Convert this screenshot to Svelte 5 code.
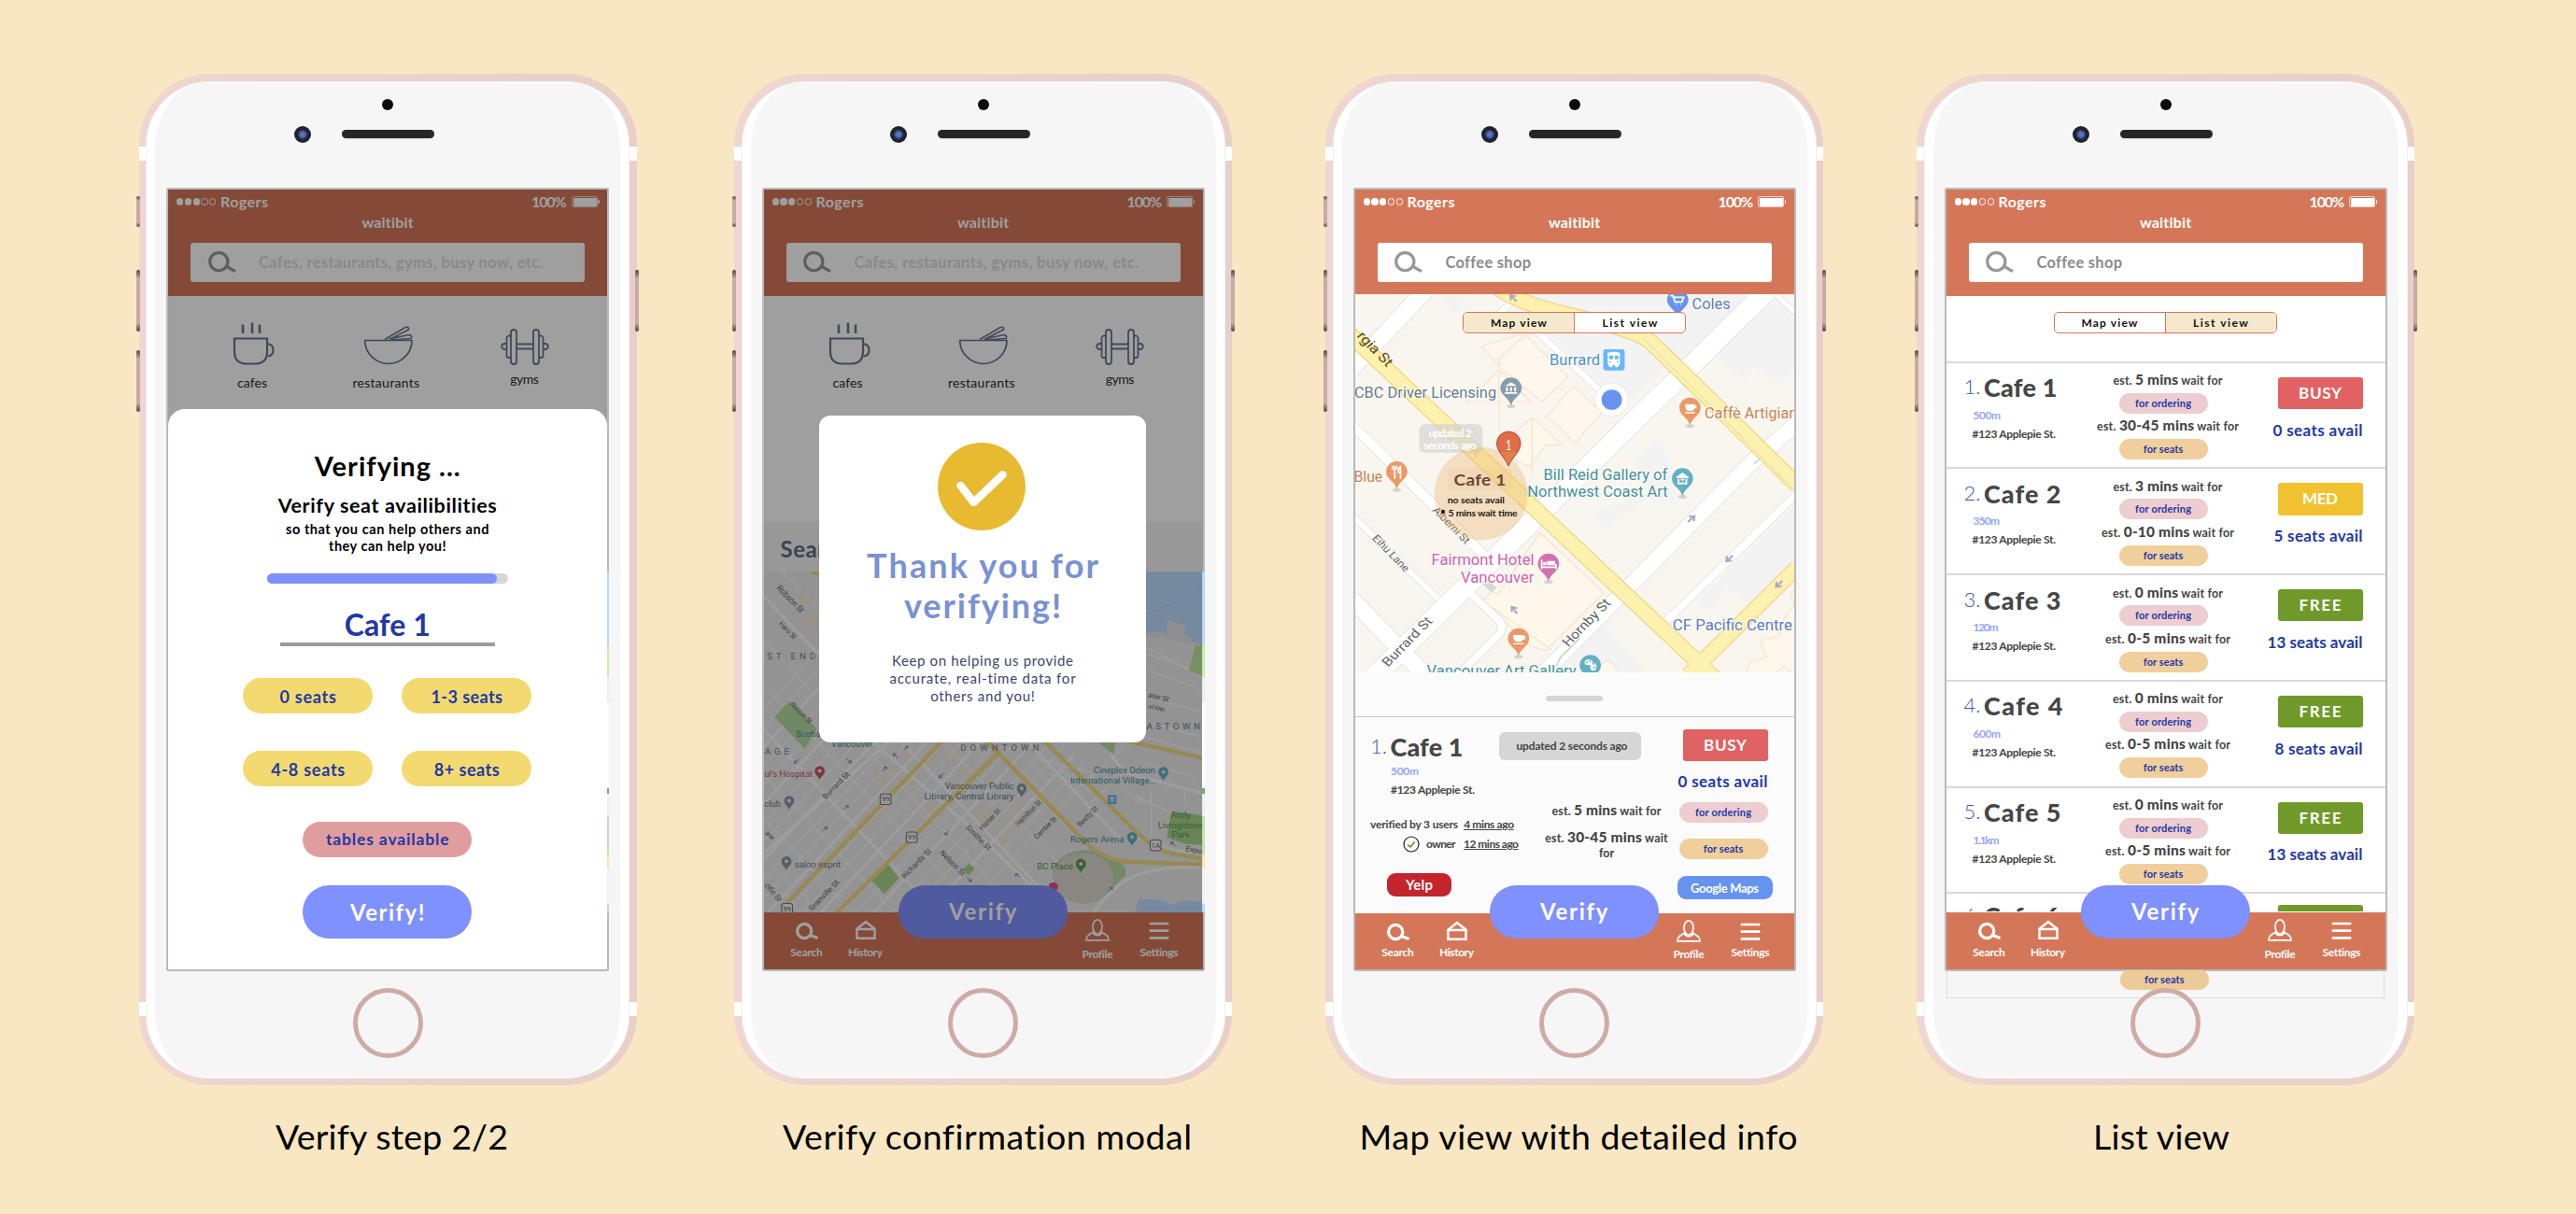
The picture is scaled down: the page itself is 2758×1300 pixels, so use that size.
<script>
  // Spreads a label's letters so that it spans its designed width in px.
  function track(node, width) {
    const set = (w) => {
      node.style.letterSpacing = '0px';
      node.style.marginRight = '0px';
      const natural = node.getBoundingClientRect().width;
      const gaps = Math.max(1, node.textContent.trim().length - 1);
      const spacing = (w - natural) / gaps;
      node.style.letterSpacing = `${spacing}px`;
      node.style.marginRight = `${-spacing}px`;
    };
    set(width);
    return { update: set };
  }

  const categories = [
    { name: 'cafes', w: 32 },
    { name: 'restaurants', w: 71.5 },
    { name: 'gyms', w: 30.5 }
  ];

  const seatOptions = [
    { text: '0 seats', w: 60.5 },
    { text: '1-3 seats', w: 76.5 },
    { text: '4-8 seats', w: 79 },
    { text: '8+ seats', w: 70 }
  ];

  const cafes = [
    { n: 1, dist: '500m', dw: 29.5, order: '5 mins', ow: 117, seat: '30-45 mins', sw: 152, status: 'BUSY', tone: 'busy', bw: 46, avail: '0 seats avail', aw: 96 },
    { n: 2, dist: '350m', dw: 28.5, order: '3 mins', ow: 117, seat: '0-10 mins', sw: 142, status: 'MED', tone: 'med', bw: 38, avail: '5 seats avail', aw: 95 },
    { n: 3, dist: '120m', dw: 27, order: '0 mins', ow: 118, seat: '0-5 mins', sw: 134, status: 'FREE', tone: 'free', bw: 45, avail: '13 seats avail', aw: 102 },
    { n: 4, dist: '600m', dw: 29.5, order: '0 mins', ow: 118, seat: '0-5 mins', sw: 134, status: 'FREE', tone: 'free', bw: 45, avail: '8 seats avail', aw: 94 },
    { n: 5, dist: '1.1km', dw: 28, order: '0 mins', ow: 118, seat: '0-5 mins', sw: 134, status: 'FREE', tone: 'free', bw: 45, avail: '13 seats avail', aw: 102 }
  ];

  // City map: evenly spaced parallel streets.
  const rising = Array.from({ length: 23 }, (_, i) => 40 + i * 52);
  const falling = Array.from({ length: 12 }, (_, i) => -560 + i * 124);
  const blocks = [
    [250, 250], [270, 320], [560, 740], [520, 800], [470, 830], [620, 760], [575, 830], [690, 740], [740, 800], [700, 860],
    [620, 920], [800, 840], [850, 900], [890, 960], [800, 960], [770, 930], [660, 1140], [830, 1030], [430, 960], [400, 1000]
  ];
  const arrows = [
    [225, 765, 135], [380, 764, 45], [485, 790, -45], [517, 747, -135], [547, 723, -45], [652, 811, 135],
    [372, 914, -45], [310, 982, -45], [669, 995, 135], [735, 1145, 45], [877, 1132, -135], [1150, 1176, -45], [1334, 1030, -135]
  ];
  const cityStreets = [
    ['Robson St', 165, 210, 48, 108, 26], ['Haro St', 172, 325, 48, 66, 22], ['Nelson St', 206, 583, 48, 84, 22],
    ['Burrard St', 312, 888, -48, 108, 24], ['Smithe St', 722, 978, 48, 100, 24], ['Nelson St', 646, 1060, 48, 100, 24],
    ['Richards St', 545, 1144, -48, 120, 24], ['Granville St', 272, 1246, -48, 122, 24], ['Homer St', 772, 988, -48, 84, 22],
    ['Hamilton St', 880, 974, -48, 102, 22], ['Cambie St', 934, 1016, -48, 88, 22], ['Beatty St', 1062, 976, -48, 78, 22],
    ['cific St', 130, 1164, 52, 68, 24], ['ater St', 1260, 560, 14, 62, 25], ['od Alley', 1260, 594, 14, 50, 20], ['Expo', 1370, 1052, 14, 50, 25],
    ['ane', 132, 996, 48, 30, 20]
  ];
  const districts = [['ST END', 138, 439, 144], ['AGE', 132, 745, 72], ['DOWNTOWN', 708, 731, 232], ['ASTOWN', 1256, 664, 158]];
  const cityPlaces = [
    ['Scotia', 224, 688, 72, 'teal'], ['Vancouver', 328, 720, 122, 'teal'], ["ul's Hospital", 131, 814, 141, 'red'], ['club', 131, 910, 49, 'slate'],
    ['salon esprit', 220, 1105, 136, 'slate'], ['Vancouver Public', 662, 855, 204, 'slate'], ['Library, Central Library', 602, 887, 264, 'slate'],
    ['Cineplex Odeon', 1100, 803, 182, 'teal'], ['International Village…', 1032, 835, 250, 'teal'], ['Rogers Arena', 1032, 1026, 158, 'teal'],
    ['BC Place', 934, 1111, 106, 'green'], ['Andy', 1328, 947, 58, 'green'], ['Livingstone', 1290, 979, 134, 'green'], ['Park', 1330, 1010, 54, 'green']
  ];
  const cityPins = [
    [294, 800, 'red'], [204, 896, 'slate'], [196, 1090, 'slate'], [889, 856, 'slate'], [1306, 803, 'teal'], [1214, 1012, 'teal'], [1063, 1098, 'green']
  ];
  const shields = [['99', 488, 886], ['99', 565, 1008], ['1A', 1283, 1034], ['99', 198, 1238]];

  // Neighbourhood map.
  const roads = [
    ['M345 395L120 655', 50], ['M1350 395L190 1640', 60], ['M1450 810L1310 940L920 1372L670 1650', 46], ['M1440 1045L1050 1460', 22],
    ['M130 825L520 1245', 28], ['M130 1115L385 1385', 18], ['M130 1385L345 1630', 50], ['M462 1350L560 1450Q580 1475 562 1498L440 1630', 22],
    ['M600 430L500 535M640 490L860 715', 18], ['M1375 405L1440 470', 14]
  ];
  const highways = [
    ['M120 530L1200 1642', 47], ['M1120 1628L1440 1282', 46], ['M560 385C640 450 780 470 900 508S1000 555 1100 655L1357 930L1440 1020', 48]
  ];
  const places = [
    ['Coles', 1130, 452, 113, 'blue'], ['Burrard', 711, 632, 149, 'sky'], ['CBC Driver Licensing', 137, 738, 418, 'slate'],
    ['Caffè Artigian', 1167, 804, 272, 'orange'], ['Bill Reid Gallery of', 693, 1002, 365, 'teal'], ['Northwest Coast Art', 646, 1056, 413, 'teal'],
    ['Blue', 136, 1008, 84, 'orange'], ['Fairmont Hotel', 364, 1276, 302, 'pink'], ['Vancouver', 450, 1331, 216, 'pink'],
    ['CF Pacific Centre', 1073, 1485, 352, 'blue'], ['Vancouver Art Gallery', 350, 1631, 440, 'teal']
  ];
  const streets = [
    ['Eihu Lane', 188, 1190, 48, 146, 32], ['Alberni St', 366, 1100, 48, 146, 32], ['Burrard St', 236, 1604, -48, 198, 40],
    ['Hornby St', 766, 1540, -48, 190, 40]
  ];
  const mapArrows = [[605, 418, -135], [608, 1420, -125], [1128, 1127, -45], [1240, 1254, 135], [1386, 1336, 135]];
</script>

{#snippet lens(size)}
  <svg class="lens" width={size} height={size * 0.85} viewBox="0 0 31 26">
    <circle cx="11.3" cy="12" r="9.6" />
    <path d="M18.5 16.5L29 22.5" />
  </svg>
{/snippet}

{#snippet header(query, width, kind)}
  <header class={kind}>
    <div class="status">
      <i class="dot"></i><i class="dot"></i><i class="dot"></i><i class="dot empty"></i><i class="dot empty"></i>
      <span class="carrier" use:track={51}>Rogers</span>
      <span class="percent"><span use:track={37.5}>100%</span></span>
      <i class="battery"></i>
    </div>
    <div class="brand"><span use:track={55.5}>waitibit</span></div>
    <div class="search">
      {@render lens(31)}
      <span use:track={width}>{query}</span>
    </div>
  </header>
{/snippet}

{#snippet nav()}
  <nav>
    <div class="tab search-tab">
      <svg width="28" height="26" viewBox="0 0 28 26" stroke-width="3.2"><circle cx="11.2" cy="14" r="7.6" /><path d="M16 18L25.5 21.5" /></svg>
      <span use:track={34.5}>Search</span>
    </div>
    <div class="tab history-tab">
      <svg width="28" height="26" viewBox="0 0 28 26" stroke-width="2.5"><path d="M4.5 21.7V11.5L14 4.2L23.5 11.5V21.7ZM4.5 12H23.5" /></svg>
      <span use:track={37}>History</span>
    </div>
    <div class="tab profile-tab">
      <svg width="28" height="26" viewBox="0 0 28 26" stroke-width="1.7">
        <ellipse cx="14" cy="9.4" rx="5" ry="7.6" />
        <path d="M2 23.8C2 19 5 18.2 9 15.4C11 19.8 17 19.8 19 15.4C23 18.2 26 19 26 23.8Z" />
      </svg>
      <span use:track={33}>Profile</span>
    </div>
    <div class="tab settings-tab">
      <svg width="28" height="26" viewBox="0 0 28 26" stroke-width="2.7"><path d="M3.7 6H24.3M3.7 13.7H24.3M3.7 21.4H24.3" /></svg>
      <span use:track={40.5}>Settings</span>
    </div>
  </nav>
  <button class="verify"><span use:track={72.5}>Verify</span></button>
{/snippet}

{#snippet toggle(active)}
  <div class="toggle">
    <span class:on={active === 'map'}><b use:track={60}>Map view</b></span>
    <span class:on={active === 'list'}><b use:track={59}>List view</b></span>
  </div>
{/snippet}

{#snippet cityMap()}
  <svg class="map city" width="470" height="365" viewBox="0 0 470 365">
    <clipPath id="grid"><path d="M130 156H1000V700L1240 960L960 1250H130Z" /></clipPath>
    <g transform="scale(.3636 .3336) translate(-130 -156)">
      <rect x="130" y="156" width="1300" height="1096" fill="#ececed" />
      {#each blocks as [x, y]}
        <rect x={x - 22} y={y - 22} width="44" height="40" fill="#f2e9d8" transform="rotate(-48 {x} {y})" />
      {/each}
      <g clip-path="url(#grid)" stroke="#fcfcfe">
        {#each rising as x}<path d="M{x - 470} 1250L{x + 470} 153" stroke-width={x % 3 ? 3 : 8} />{/each}
        {#each falling as x}<path d="M{x} 156L{x + 950} 1250" stroke-width={x % 3 ? 3 : 9} />{/each}
      </g>
      <g fill="none" stroke="#fcfcfe" stroke-width="4">
        <path d="M1000 790L1120 880M1080 830L1190 720M1250 770L1400 815M1270 860V1020M1190 860L1330 930M1257 420L1428 480M1257 400L1428 500M1370 860V900M1236 890H1262" />
        <path d="M1257 470L1428 540M1257 640L1428 690M1257 560L1428 610M1257 690L1428 740M1090 900L1200 790M940 760L1090 800" />
        <path d="M130 1060L560 640M300 560L720 960L980 1230M1150 742L1190 800L1428 870M1100 1250C1180 1140 1230 1100 1428 1104M1230 1010L1340 1050L1428 1065" stroke-width="10" />
        <ellipse cx="237" cy="1215" rx="24" ry="28" /><ellipse cx="1233" cy="888" rx="10" ry="10" />
      </g>
      <g stroke="none">
        <path d="M1200 156H1428V392L1350 372L1257 358Z" fill="#bddcff" />
        <path d="M1257 352L1300 350L1316 366L1318 312L1372 330L1366 358L1390 372L1380 392L1257 360Z" fill="#e6e6e8" />
        <path d="M1400 394L1430 390V496L1380 474Z" fill="#c0e6a2" />
        <path d="M160 622L205 572L285 660L250 725Z" fill="#b5dba0" />
        <path d="M448 1150L495 1095L527 1140L485 1190Z" fill="#a9d48c" />
        <path d="M715 1112L735 1093L750 1110L732 1132Z" fill="#a9d48c" />
        <path d="M1115 705L1165 705L1158 742Z" fill="#b5dba0" />
        <path d="M1330 925L1428 940V1035L1370 1030L1316 1010Z" fill="#a9d48c" />
        <path d="M1125 1060C1170 1070 1200 1100 1196 1130L1110 1215C1040 1240 985 1190 980 1130C985 1060 1060 1035 1125 1060Z" fill="#b9dba8" />
        <ellipse cx="1070" cy="1140" rx="88" ry="82" fill="#dcd9d0" />
        <path d="M1234 1206L1300 1210L1330 1226L1360 1212L1430 1216V1252H1222Z" fill="#bddcff" />
      </g>
      <g fill="none" stroke="#f3dc86" stroke-width="13">
        <path d="M196 1222L655 700M340 1256L825 732M785 700L1092 1042Q1150 1085 1200 1088L1430 1096M955 700L1215 980Q1280 1050 1330 1062L1430 1078M1160 690L1430 757" />
        <path d="M270 156L292 164" />
      </g>
      <path d="M1262 292C1340 250 1400 240 1428 186" fill="none" stroke="#93b5e0" stroke-width="2" stroke-dasharray="8 6" />
      {#each arrows as [x, y, a]}
        <path d="M-9 0H8M2 -6L9 0L2 6" transform="translate({x} {y}) rotate({a})" fill="none" stroke="#8e91b8" stroke-width="3" />
      {/each}
      <g class="street">
        {#each cityStreets as [t, x, y, a, w, s]}
          <text {x} {y} font-size={s} transform="rotate({a} {x} {y})" textLength={w} lengthAdjust="spacingAndGlyphs">{t}</text>
        {/each}
      </g>
      <g class="district">
        {#each districts as [t, x, y, w]}<text {x} {y} font-size="27" textLength={w}>{t}</text>{/each}
      </g>
      {#each cityPlaces as [t, x, y, w, tone]}
        <text class={tone} {x} {y} font-size="28" textLength={w} lengthAdjust="spacingAndGlyphs">{t}</text>
      {/each}
      {#each cityPins as [x, y, tone]}
        <g class="pin {tone}" transform="translate({x} {y}) scale(.92 1)">
          <path d="M0 26C-3 12 -16 10 -16 -4A16 16 0 0 1 16 -4C16 10 3 12 0 26Z" />
          <circle cy="-4" r="6" fill="#e8e8e8" />
        </g>
      {/each}
      <circle cx="982" cy="1168" r="14" fill="#e0489a" />
      <rect x="1142" y="874" width="26" height="29" rx="4" fill="#67b3f5" />
      <path d="M1148 880H1162V888H1148ZM1148 892H1162V896H1148Z" fill="#e8e8e8" />
      {#each shields as [t, x, y]}
        <rect x={x - 16} y={y - 16} width="32" height="34" rx="7" fill="#f4f4f4" stroke="#777" stroke-width="3" />
        <text class="street" {x} y={y + 8} font-size="21" text-anchor="middle">{t}</text>
      {/each}
    </g>
  </svg>
{/snippet}

{#snippet pin(x, y, tone)}
  <g class="pin {tone}" transform="translate({x} {y}) scale(.917 1)">
    <ellipse cx="0" cy="58" rx="14" ry="6" fill="#999" opacity=".35" />
    <path d="M0 58C-3 32 -34 24 -34 0A34 34 0 0 1 34 0C34 24 3 32 0 58Z" />
  </g>
{/snippet}

{#snippet areaMap()}
  <svg class="map" width="470" height="405" viewBox="0 0 470 405">
    <g transform="scale(.3642 .3333) translate(-140 -405)">
      <rect x="140" y="405" width="1292" height="1220" fill="#f9f6ef" />
      <g fill="#f3f3f4">
        <path d="M390 405H1330L1080 660L960 540L640 470L580 405ZM430 405L400 430L430 470L470 440Z" />
        <path d="M1370 405L1432 450V650L1380 690L1310 640L1290 680L1120 540Z" />
        <path d="M860 700L700 520L980 545L1060 640L900 780Z" />
        <path d="M1030 870L960 950L1010 1040L830 1110L880 1150L1000 1060L1080 1080L1060 930Z" />
        <path d="M1432 1080L1140 1400L1180 1420L1230 1350L1300 1400L1432 1260Z" />
        <path d="M870 1460L760 1590L800 1620H990Z" />
      </g>
      <g fill="#fdf7ec" stroke="#f9e3cc" stroke-width="3.5">
        <path d="M640 530L510 572L566 636L560 612L640 536L766 672L690 752L566 640M683 1170L870 1365L700 1550L515 1390L540 1360L560 1370Z" />
        <path d="M782 700L845 765L870 780L785 885L740 830L700 800L782 700M563 648V845M563 648L470 750H655L563 648M660 800V985M660 800L560 900M660 800L748 890H700L652 960L600 930" />
        <path d="M1432 1350L1420 1370L1432 1400L1380 1480L1390 1500L1330 1520L1350 1570L1300 1590L1290 1625H1370L1400 1600L1432 1630ZM820 1625L885 1580L925 1625" />
        <path d="M540 1410L715 1545L695 1550L640 1530L560 1430Z" />
      </g>
      <path d="M520 1330L540 1332L556 1350L540 1362L515 1338Z" fill="#d6d8db" />
      <path d="M860 405L888 440" stroke="#e8e8ee" stroke-width="2" />
      <g fill="none">
        {#each roads as [d, w]}<path {d} stroke="#e2e2e5" stroke-width={w + 5} />{/each}
        {#each roads as [d, w]}<path {d} stroke="#fff" stroke-width={w} />{/each}
        {#each highways as [d, w]}<path {d} stroke="#efd581" stroke-width={w + 3} />{/each}
        {#each highways as [d, w]}<path {d} stroke="#fcf1ae" stroke-width={w - 4} />{/each}
        <path d="M985 545L1432 1035" stroke="#e3dfb8" stroke-width="3" />
        <path d="M730 1600L745 1570L800 1510M1312 950L1328 935" stroke="#a9cfa4" stroke-width="3" />
      </g>
      {#each mapArrows as [x, y, a]}
        <path d="M-14 0H12M0 -10L13 0L0 10" transform="translate({x} {y}) rotate({a})" fill="none" stroke="#a9a9c4" stroke-width="6" />
      {/each}
      <g class="street">
        <text x="143" y="541" font-size="43" transform="rotate(48 143 541)" class="georgia" textLength="134" lengthAdjust="spacingAndGlyphs">rgia St</text>
        {#each streets as [t, x, y, a, w, s]}
          <text {x} {y} font-size={s} transform="rotate({a} {x} {y})" textLength={w} lengthAdjust="spacingAndGlyphs">{t}</text>
        {/each}
      </g>
      {#each places as [t, x, y, w, tone]}
        <text class="place {tone}" {x} {y} font-size="47" textLength={w} lengthAdjust="spacingAndGlyphs">{t}</text>
      {/each}

      {@render pin(1088, 424, 'blue')}
      <path d="M1066 410H1074L1080 430H1100L1106 415H1076M1082 438H1084M1096 438H1098" fill="none" stroke="#fff" stroke-width="5" />
      {@render pin(598, 707, 'slate')}
      <path d="M581 700L598 688L615 700ZM583 704H589V718H583ZM595 704H601V718H595ZM607 704H613V718H607ZM580 720H616V725H580Z" fill="#fff" />
      {@render pin(1124, 771, 'orange')}
      <path d="M1110 758H1138V762H1143V772H1137Q1135 780 1128 780H1118Q1110 780 1110 758ZM1110 784H1138V788H1110Z" fill="#fff" />
      {@render pin(262, 976, 'orange')}
      <path d="M250 956V970M256 956V970M262 956V970M256 970V998M273 998V958Q266 962 267 978H273" fill="none" stroke="#fff" stroke-width="4.5" />
      {@render pin(1102, 998, 'teal')}
      <path d="M1084 992L1102 978L1120 992V996H1084ZM1088 998H1116V1016H1088Z" fill="#fff" />
      <path d="M1095 1012V1002L1102 1009L1109 1002V1012" fill="none" stroke="#62b0c4" stroke-width="4" />
      {@render pin(708, 1272, 'pink')}
      <path d="M688 1258V1288M688 1282H730V1288M730 1282V1272" fill="none" stroke="#fff" stroke-width="5" />
      <path d="M692 1266H702V1276H692ZM704 1262H728V1276H704Z" fill="#fff" />
      {@render pin(620, 1512, 'orange')}
      <path d="M604 1500H634V1502H640V1514H633Q631 1522 624 1522H614Q604 1520 604 1500ZM604 1526H636V1530H604Z" fill="#fff" />
      {@render pin(831, 1598, 'teal')}
      <g fill="#fff"><ellipse cx="826" cy="1588" rx="12" ry="9" /><ellipse cx="840" cy="1602" rx="9" ry="13" /></g>
      <g fill="#62b0c4"><circle cx="820" cy="1588" r="3" /><circle cx="830" cy="1584" r="3" /><circle cx="840" cy="1592" r="3" /><circle cx="843" cy="1604" r="3" /></g>

      <rect x="869" y="582" width="63" height="68" rx="8" fill="#67b9f9" />
      <path d="M882 594Q900 586 918 594V628L912 640H906L902 632H898L894 640H888L882 628Z" fill="#fff" />
      <path d="M887 602H898V614H887ZM903 602H914V614H903ZM887 620H892V625H887ZM909 620H914V625H909Z" fill="#67b9f9" />

      <ellipse cx="894" cy="744" rx="49" ry="53" fill="#fff" stroke="#e3e3e3" stroke-width="2" />
      <ellipse cx="894" cy="744" rx="30" ry="32.5" fill="#6894ef" />

      <path d="M346 823H496Q514 823 514 843V896Q514 912 502 914L497 932L484 914H346Q328 914 328 896V843Q328 823 346 823Z" fill="#cfcfd0" opacity=".62" />
      <ellipse cx="510" cy="1046" rx="137" ry="149" fill="#e9b469" opacity=".36" />
      <rect x="414" y="963" width="186" height="72" rx="10" fill="#f0bc95" opacity=".18" />
      <path d="M590 957C582 930 556 912 556 884A34.500 37 0 0 1 626 884C626 912 600 930 590 957Z" fill="#e06c48" stroke="#a43336" stroke-width="2.500" />
      <path d="M590 954C585 938 575 926 568 912H614C606 928 596 938 590 954Z" fill="#df8a4a" opacity=".7" />
      <g class="lato">
        <text x="582" y="905" font-size="46" fill="#fff" class="thin" textLength="17" lengthAdjust="spacingAndGlyphs">1</text>
        <g fill="#fff"><text x="356" y="864" font-size="31" textLength="126">updated 2</text><text x="342" y="903" font-size="31" textLength="154">seconds ago</text></g>
        <text x="430" y="1020" font-size="52" fill="#5f4a30" textLength="153">Cafe 1</text>
        <text x="411" y="1076" font-size="29" fill="#1c1812" textLength="168">no seats avail</text>
        <text x="413" y="1119" font-size="29" fill="#1c1812" textLength="204">5 mins wait time</text>
      </g>
      <ellipse cx="398" cy="1104" rx="6" ry="7" fill="#1c1812" />
    </g>
  </svg>
{/snippet}

{#snippet homeTop()}
  {@render header('Cafes, restaurants, gyms, busy now, etc.', 304.5, 'home')}
  <section class="categories">
    <div class="category">
      <svg class="cup" width="52" height="48" viewBox="0 0 52 48" stroke-width="2.2">
        <path d="M5 21H40V35Q40 48 27 48H18Q5 48 5 35ZM40 27H42Q46.500 28 46.500 33.500T41 40" transform="translate(0 -1.500)" />
        <path d="M14 4.500V14M24 2.500V14M32 4.500V14" stroke-width="2.600" />
      </svg>
      <span use:track={categories[0].w}>{categories[0].name}</span>
    </div>
    <div class="category">
      <svg class="bowl" width="54" height="48" viewBox="0 0 54 48" stroke-width="1.7">
        <path d="M1.700 21.500H52C52 36 40 46.500 27 46.500S1.700 36 1.700 21.500Z" />
        <path d="M23 20.500L45 7.500Q49 6.500 48.500 10L28 20.500M28 20L49 15.500Q53 16.500 51 19.500L30 21" />
      </svg>
      <span use:track={categories[1].w}>{categories[1].name}</span>
    </div>
    <div class="category raised">
      <svg width="52" height="48" viewBox="0 0 52 48" stroke-width="1.8">
        <rect x="11" y="10" width="6" height="37" rx="3" /><rect x="35" y="10" width="6" height="37" rx="3" />
        <path d="M11 16.500H8.500Q6.500 17 6.500 19V38Q6.500 40 8.500 40H11M41 16.500H43.500Q45.500 17 45.500 19V38Q45.500 40 43.500 40H41M6.500 25H4Q1.200 25.500 1.200 28T4 31H6.500M45.500 25H48Q50.800 25.500 50.800 28T48 31H45.500M17 25.500H35M17 30.500H35" />
      </svg>
      <span use:track={categories[2].w}>{categories[2].name}</span>
    </div>
  </section>
{/snippet}

{#snippet phone(caption, width, screen)}
  <figure>
    <div class="phone">
      <i class="key mute"></i><i class="key up"></i><i class="key down"></i><i class="key power"></i>
      <div class="face">
        <div class="bezel">
          <i class="sensor"></i>
          <div class="earpiece"><i class="camera"></i><i class="speaker"></i></div>
        </div>
        <div class="screen">{@render screen()}</div>
        <i class="home-button"></i>
      </div>
    </div>
    <figcaption><span use:track={width}>{caption}</span></figcaption>
  </figure>
{/snippet}

{#snippet verifyScreen()}
  {@render homeTop()}
  <div class="shade"></div>
  <i class="peek"></i>
  <div class="sheet">
    <h1><span use:track={156}>Verifying ...</span></h1>
    <h3><span use:track={234.5}>Verify seat availibilities</span></h3>
    <p><span use:track={217.5}>so that you can help others and</span><br /><span use:track={125.5}>they can help you!</span></p>
    <div class="progress"><i></i></div>
    <div class="cafe-field"><span use:track={92}>Cafe 1</span></div>
    <div class="options">
      {#each seatOptions as o}<button><span use:track={o.w}>{o.text}</span></button>{/each}
    </div>
    <button class="tables"><span use:track={131.5}>tables available</span></button>
    <button class="submit"><span use:track={79.5}>Verify!</span></button>
  </div>
{/snippet}

{#snippet confirmScreen()}
  {@render homeTop()}
  <h2 class="nearby">Search</h2>
  {@render cityMap()}
  {@render nav()}
  <div class="shade"></div>
  <i class="peek"></i>
  <div class="modal">
    <svg width="94" height="94" viewBox="0 0 94 94"><circle cx="47" cy="47" r="47" fill="#e7ba32" /><path d="M24.500 46L38.500 64L69.500 34.500" /></svg>
    <h2><span use:track={248}>Thank you for</span><br /><span use:track={168}>verifying!</span></h2>
    <p><span use:track={194}>Keep on helping us provide</span><br /><span use:track={199.5}>accurate, real-time data for</span><br /><span use:track={111.5}>others and you!</span></p>
  </div>
{/snippet}

{#snippet mapScreen()}
  {@render header('Coffee shop', 91, 'short')}
  <div class="map-area">
    {@render areaMap()}
    {@render toggle('map')}
  </div>
  <div class="detail">
    <div class="grabber"><i></i></div>
    <div class="detail-body">
      <div class="col-a">
        <div class="title"><span class="num">1.</span><strong use:track={78}>Cafe 1</strong></div>
        <div class="dist"><span use:track={30}>500m</span></div>
        <div class="addr"><span use:track={90}>#123 Applepie St.</span></div>
        <div class="checked"><span use:track={94}>verified by 3 users</span><u use:track={54}>4 mins ago</u></div>
        <div class="checked owner">
          <svg width="18" height="18" viewBox="0 0 18 18"><circle cx="9" cy="9" r="8" /><path d="M5 9.500L8 12L12.500 6.500" /></svg>
          <span use:track={31.5}>owner</span><u use:track={59}>12 mins ago</u>
        </div>
        <button class="yelp"><span use:track={29}>Yelp</span></button>
      </div>
      <div class="col-b">
        <div class="updated"><span use:track={119}>updated 2 seconds ago</span></div>
        <div class="est"><span use:track={117}>est. <b>5 mins</b> wait for</span></div>
        <div class="est two"><span use:track={131.5}>est. <b>30-45 mins</b> wait</span><br />for</div>
      </div>
      <div class="col-c">
        <div class="badge busy"><span use:track={46}>BUSY</span></div>
        <div class="avail"><span use:track={96}>0 seats avail</span></div>
        <div class="pill ordering"><span use:track={60}>for ordering</span></div>
        <div class="pill seats"><span use:track={42.5}>for seats</span></div>
        <button class="google"><span use:track={73}>Google Maps</span></button>
      </div>
    </div>
  </div>
  {@render nav()}
{/snippet}

{#snippet listScreen()}
  {@render header('Coffee shop', 91, 'tall')}
  <div class="list-head">{@render toggle('list')}</div>
  <ul>
    {#each cafes as c}
      <li>
        <div class="info">
          <div class="title"><span class="num">{c.n}.</span><strong use:track={c.n === 1 ? 78.5 : c.n === 4 ? 84.5 : 82.5}>Cafe {c.n}</strong></div>
          <div class="dist"><span use:track={c.dw}>{c.dist}</span></div>
          <div class="addr"><span use:track={89.5}>#123 Applepie St.</span></div>
        </div>
        <div class="waits">
          <div class="est"><span use:track={c.ow}>est. <b>{c.order}</b> wait for</span></div>
          <div class="pill ordering"><span use:track={60}>for ordering</span></div>
          <div class="est"><span use:track={c.sw}>est. <b>{c.seat}</b> wait for</span></div>
          <div class="pill seats"><span use:track={42.5}>for seats</span></div>
        </div>
        <div class="state">
          <div class="badge {c.tone}"><span use:track={c.bw}>{c.status}</span></div>
          <div class="avail"><span use:track={c.aw}>{c.avail}</span></div>
        </div>
      </li>
    {/each}
    <li class="last">
      <div class="info"><div class="title"><span class="num">6.</span><strong use:track={81}>Cafe 6</strong></div></div>
      <div class="waits"></div>
      <div class="state"><div class="badge free"></div></div>
    </li>
  </ul>
  {@render nav()}
  <div class="overflow"><div class="pill seats"><span use:track={42.5}>for seats</span></div></div>
{/snippet}

<main>
  {@render phone('Verify step 2/2', 249, verifyScreen)}
  {@render phone('Verify confirmation modal', 438, confirmScreen)}
  {@render phone('Map view with detailed info', 469, mapScreen)}
  {@render phone('List view', 146, listScreen)}
</main>

<style>
  :global(body) { background: #f8e7c2; }
  * { box-sizing: border-box; }
  main {
    display: flex; gap: 100px; width: 2758px; height: 1300px; padding: 79px 0 0 148.5px; overflow: hidden;
    background: #f8e7c2; font-family: Lato, "Open Sans", sans-serif; font-weight: 700;
  }
  h1, h2, h3, p, ul, figure { margin: 0; padding: 0; }
  button { border: 0; padding: 0; font: inherit; color: inherit; display: block; }
  span, strong, b, u { white-space: pre; }
  header span, .brand span { display: inline-block; }
  i { display: block; }
  svg { display: block; flex: none; }

  figure { width: 533px; flex: none; }
  figure:nth-child(2) { margin-left: 4.5px; }
  figcaption { margin-top: 32.5px; height: 44px; font-size: 37.5px; line-height: 44px; font-weight: 400; text-align: center; color: #000; padding-left: 9px; }
  figcaption span { display: inline-block; }
  figure:nth-child(4) figcaption { padding: 0 9px 0 0; }

  .phone {
    position: relative; width: 533px; height: 1083px; padding: 7.5px; border-radius: 76px;
    background:
      linear-gradient(#fff, #fff) 0 78px / 100% 15px no-repeat,
      linear-gradient(#fff, #fff) 0 994px / 100% 15px no-repeat,
      linear-gradient(90deg, #f0d6d0, #e9cfca);
  }
  .face {
    position: relative; height: 100%; border-radius: 68px; background: #fff; border: 1.5px solid #f0f0f0;
    display: flex; flex-direction: column; align-items: center; isolation: isolate;
  }
  .face::before { content: ""; position: absolute; z-index: -1; inset: 1px 9px; border-radius: 52px / 70px; background: #f6f6f6; }
  .bezel { height: 113px; width: 100%; display: flex; flex-direction: column; align-items: center; flex: none; }
  .sensor { width: 12px; height: 12px; margin-top: 18px; border-radius: 50%; background: #0b0b0b; }
  .earpiece { display: flex; align-items: center; margin: 17px 50px 0 0; gap: 33px; }
  .camera { width: 18px; height: 18px; border-radius: 50%; background: radial-gradient(circle, #5a72c0 0 2px, #34437e 4.5px, #20242c 5px); }
  .speaker { width: 99px; height: 9px; border-radius: 5px; background: #262626; box-shadow: 0 1px 1px #e5d5d5; }
  .screen { position: relative; width: 474px; height: 839px; border: 2px solid #b9bab9; border-radius: 2px; background: #fff; flex: none; display: flex; flex-direction: column; }
  .home-button { position: relative; width: 75px; height: 75px; margin-top: 18px; border: 5px solid #cdaba6; border-radius: 50%; flex: none; }
  .key { position: absolute; left: -2.5px; width: 4px; background: linear-gradient(#5b4143, #c9aaa6 14%, #c9aaa6 86%, #5b4143); border-radius: 2px; }
  .mute { top: 131px; height: 33px; }
  .up { top: 210px; height: 66px; }
  .down { top: 296px; height: 66px; }
  .power { top: 210px; height: 66px; left: auto; right: -2.5px; }

  header { height: 114.5px; flex: none; background: #d47758; color: #fff; padding: 3.5px 0 0; }
  header.short { height: 112px; }
  .status { display: flex; align-items: center; height: 20px; padding: 0 9px; font-size: 16px; line-height: 20px; }
  .dot { width: 7.3px; height: 7.3px; margin-right: 1.5px; border-radius: 50%; background: #fff; }
  .dot.empty { background: none; border: 1px solid #fff; }
  .carrier { margin-left: 3px; }
  .percent { margin-left: auto; margin-right: 5px; }
  .battery { position: relative; width: 28px; height: 12.5px; margin-right: 1.5px; border-radius: 2.5px; border: 1px solid #ffffffa8; background: #fff content-box; padding: .5px; }
  .battery::after { content: ""; position: absolute; right: -3px; top: 3px; width: 1.5px; height: 4.5px; border-radius: 1px; background: #fff; }
  .brand { height: 20px; margin-top: 1.5px; font-size: 16px; line-height: 20px; text-align: center; }
  .search { display: flex; align-items: center; width: 422px; height: 42.5px; margin: 12px auto 0; padding-left: 18.5px; border-radius: 3px; background: #fff; font-size: 16.5px; line-height: 20px; color: #8b8b8b; }
  .home .search { color: #dcdcdc; }
  .search > span { margin-left: 23.5px; padding-top: 1px; }
  .lens { fill: none; stroke: #979797; stroke-width: 3.2; }

  .categories { display: flex; justify-content: space-between; height: 241.5px; flex: none; padding: 25.5px 44.5px 0 46px; font-size: 14px; font-weight: 400; color: #2c2c2c; line-height: 18px; }
  .category { display: flex; flex-direction: column; align-items: center; width: 88px; height: 90px; }
  .category:nth-child(2) { margin-right: 5px; }
  .category span { margin-top: 10px; display: inline-block; }
  .category.raised span { margin-top: 6px; }
  .category svg { fill: none; stroke: #69758f; }
  .category .cup { margin-left: 4px; }
  .category .bowl { margin-left: 5px; }
  .nearby { height: 53px; flex: none; padding-left: 18px; background: #f4f4f4; font-size: 24px; line-height: 58px; color: #616b86; letter-spacing: .5px; }
  .shade { position: absolute; inset: 0; background: rgba(0, 0, 0, .376); }
  .peek {
    position: absolute; left: 469.5px; top: 409px; width: 2.5px; height: 365px;
    background: linear-gradient(#b5d8ff 0 79px, #c6ecae 79px 113px, #eee 113px 140px, #fff 140px 232px, #6bb25a 232px 238px, #eee 238px 262px, #bfe3b5 262px 300px, #f7e9a8 306px 316px, #f1f1f1 320px 356px, #b5d8ff 356px);
  }

  nav { display: flex; height: 60.5px; margin-top: auto; flex: none; padding: 6px 13.5px 0 17px; background: #d47758; color: #fff; font-size: 12px; line-height: 16px; position: relative; }
  .tab { display: flex; flex-direction: column; align-items: center; }
  .tab span { margin-top: 2.5px; display: inline-block; }
  .tab svg { fill: none; stroke: #fff; }
  .search-tab { width: 58px; }
  .history-tab { width: 68px; }
  .profile-tab, .settings-tab { width: 66px; }
  .profile-tab { margin-left: auto; }
  .profile-tab span { margin-top: 4.5px; }
  .verify { position: absolute; left: 144px; top: 745px; width: 181.5px; height: 57.5px; border-radius: 29px; background: #7f90ff; color: #fff; font-size: 24px; line-height: 52px; text-align: center; }
  .verify span, .submit span { display: inline-block; }

  .sheet { position: absolute; inset: 235px 0 0; width: 469.5px; border-radius: 18px 18px 0 0; background: #fff; color: #000; text-align: center; display: flex; flex-direction: column; align-items: center; }
  .sheet span { display: inline-block; }
  .sheet h1 { margin-top: 43px; font-size: 29px; line-height: 36px; }
  .sheet h3 { margin-top: 10.5px; font-size: 21.5px; line-height: 28px; }
  .sheet p { margin-top: 3px; font-size: 14.5px; line-height: 18.2px; }
  .progress { width: 258px; height: 11px; margin-top: 20px; border-radius: 6px; background: #d6d6d6; }
  .progress i { width: 95.5%; height: 100%; border-radius: 6px; background: #7f90f8; }
  .cafe-field { width: 230px; height: 67px; border-bottom: 4px solid #9b9b9b; font-size: 32px; line-height: 87px; color: #2238a6; }
  .options { display: grid; grid-template-columns: 139px 139px; column-gap: 31px; row-gap: 40.5px; margin-top: 33.7px; }
  .options button { height: 37.5px; border-radius: 19px; background: #f3da70; color: #2238a6; font-size: 18px; line-height: 40px; text-align: center; }
  .tables { width: 181px; height: 37.5px; margin-top: 38.5px; border-radius: 19px; background: #e09d9d; color: #2238a6; font-size: 17.5px; line-height: 38px; text-align: center; }
  .submit { width: 181px; height: 57.5px; margin-top: 30px; border-radius: 29px; background: #7f90ff; color: #fff; font-size: 24px; line-height: 51px; text-align: center; }

  .modal { position: absolute; left: 59.5px; top: 242px; width: 350px; height: 350px; border-radius: 12px; background: #fff; text-align: center; display: flex; flex-direction: column; align-items: center; }
  .modal span { display: inline-block; }
  .modal svg { margin: 29px 2px 0 0; }
  .modal path { fill: none; stroke: #fff; stroke-width: 8.5; stroke-linecap: round; stroke-linejoin: round; }
  .modal h2 { margin-top: 16px; font-size: 36px; line-height: 43.3px; color: #7a91d3; }
  .modal p { margin-top: 28px; font-size: 15px; line-height: 19px; font-weight: 400; color: #3b466c; }

  .map { font-family: Roboto, sans-serif; font-weight: 400; overflow: hidden; }
  .map .street { fill: #626262; }
  .map .georgia { fill: #5d4a1c; }
  .map .district { fill: #8d93a5; font-weight: 500; }
  .map .blue { fill: #5a7cc6; }
  .map .sky { fill: #4c91cf; }
  .map .slate { fill: #647c8f; }
  .map .orange { fill: #c9814f; }
  .map .teal { fill: #43919b; }
  .map .pink { fill: #d160ae; }
  .map .red { fill: #c95560; }
  .map .green { fill: #5c9a50; }
  .map .pin.blue path { fill: #6894ef; }
  .map .pin.slate path { fill: #869bac; }
  .map .pin.orange path { fill: #e99a66; }
  .map .pin.teal path { fill: #62b0c4; }
  .map .pin.pink path { fill: #d272b4; }
  .map .place { paint-order: stroke; stroke: #fffdf8; stroke-width: 5px; }
  .map .lato { font-family: Lato, sans-serif; font-weight: 700; }
  .map .thin { font-weight: 400; }
  .city { flex: none; }

  .map-area { position: relative; height: 405px; flex: none; overflow: hidden; }
  .toggle { display: flex; width: 239px; height: 23.7px; border: 1.7px solid #d47758; border-radius: 5px; overflow: hidden; background: #fff; font-size: 12px; line-height: 22px; text-align: center; color: #111; }
  .toggle span { flex: 1; }
  .toggle b { display: inline-block; font-weight: 700; }
  .toggle span + span { border-left: 1.7px solid #d47758; }
  .toggle .on { background: #f6e8cc; }
  .map-area .toggle { position: absolute; left: 115.5px; top: 19.3px; }

  .detail { height: 258px; flex: none; background: #fbfbfb; border-radius: 5px 5px 0 0; color: #444; }
  .grabber { height: 48px; border-bottom: 1px solid #c9c9c9; padding-top: 25px; }
  .grabber i { width: 61.5px; height: 6px; margin: 0 auto; border-radius: 3px; background: #d5d5d5; }
  .detail-body { display: flex; }
  .detail span, .detail u, .detail strong { display: inline-block; }
  .num { color: #3c57bd; font-weight: 300; font-size: 22px; line-height: 30px; width: 21.5px; }
  .title { display: flex; align-items: flex-start; }
  .title strong { font-size: 27px; line-height: 31px; color: #464646; }
  .dist { font-size: 12px; line-height: 16px; color: #96a6f8; }
  .addr { font-size: 12px; line-height: 16px; color: #444; }
  .col-a { width: 176px; padding: 16.5px 0 0 16.5px; flex: none; }
  .col-a .dist { margin: 2.5px 0 0 22px; }
  .col-a .addr { margin: 4px 0 0 22px; }
  .checked { display: flex; gap: 6px; margin-top: 21.5px; font-size: 12px; line-height: 16px; white-space: nowrap; }
  .checked.owner { margin-top: 5px; padding-left: 35px; }
  .owner svg { margin: -1px 0 0; fill: none; stroke: #222; stroke-width: 1.2; }
  .owner path { stroke: #4c8a22; stroke-width: 1.5; }
  .owner u { margin-left: 2.5px; }
  .owner svg + span { margin-left: 1px; }
  .yelp { width: 69px; height: 24.5px; margin: 22px 0 0 18px; border-radius: 9px; background: #c4242c; color: #fff; font-size: 15px; line-height: 25px; text-align: center; }
  .col-b { width: 169px; padding-top: 16.5px; flex: none; }
  .updated { width: 152px; height: 30px; margin-left: -21.5px; border-radius: 6px; background: #d6d6d6; font-size: 12px; line-height: 30px; text-align: center; padding-left: 4px; }
  .est { height: 18px; font-size: 12.5px; line-height: 18px; text-align: center; color: #444; }
  .est b { font-size: 15.5px; line-height: 1; }
  .col-b .est { margin: 46px 0 0 18px; }
  .col-b .est.two { margin-top: 11px; line-height: 16px; }
  .col-c { width: 97px; padding-top: 13px; display: flex; flex-direction: column; align-items: flex-end; flex: none; }
  .badge { width: 91px; height: 34.3px; border-radius: 3px; color: #fff; font-size: 17px; line-height: 34px; text-align: center; }
  .badge span, .est span, .pill span, .avail span, .dist span, .addr span { display: inline-block; }
  .busy { background: #e16262; }
  .med { background: #f0c22f; }
  .free { background: #6f9a2a; }
  .avail { font-size: 17px; line-height: 22px; color: #2238a6; white-space: nowrap; }
  .pill { width: 95px; height: 22px; border-radius: 11px; color: #2238a6; font-size: 11px; line-height: 22px; text-align: center; flex: none; }
  .pill.ordering { background: #edcdd0; }
  .pill.seats { background: #f1cf9c; }
  .col-c .avail { margin-top: 11px; }
  .col-c .pill.ordering { margin-top: 11.5px; }
  .col-c .pill.seats { margin-top: 17px; }
  .google { width: 102px; height: 24.5px; margin: 18px -5px 0 0; border-radius: 9px; background: #6793f0; color: #fff; font-size: 13px; line-height: 24px; text-align: center; flex: none; }

  .list-head { height: 69.8px; flex: none; padding: 16.5px 0 0 115px; }
  ul { list-style: none; height: 589px; flex: none; overflow: hidden; }
  li { display: flex; height: 113.7px; border-top: 2px solid #d9d9d9; }
  .info { width: 175px; padding: 10.5px 0 0 19px; flex: none; }
  .info .dist { margin: 6.5px 0 0 10px; }
  .info .addr { margin: 4px 0 0 9px; }
  .waits { width: 115px; padding-top: 10.5px; display: flex; flex-direction: column; align-items: center; flex: none; }
  .waits .est { white-space: nowrap; margin-left: 10px; }
  .waits .pill.ordering { margin: 3.5px 0 5.5px; }
  .waits .pill.seats { margin-top: 4px; }
  .state { width: 156px; padding-top: 15px; display: flex; flex-direction: column; align-items: flex-end; flex: none; }
  .state .avail { margin-top: 11.5px; }
  .last .info { padding-top: 7.5px; }
  .last .state { padding-top: 12px; }
  .overflow { position: absolute; left: 0; top: 836px; width: 469.5px; height: 30.5px; border: 1px solid #dcdcdc; border-top: 0; display: flex; justify-content: center; overflow: hidden; }
  .overflow .pill { margin: -1px 2px 0 0; background: #eccb98; }
</style>
